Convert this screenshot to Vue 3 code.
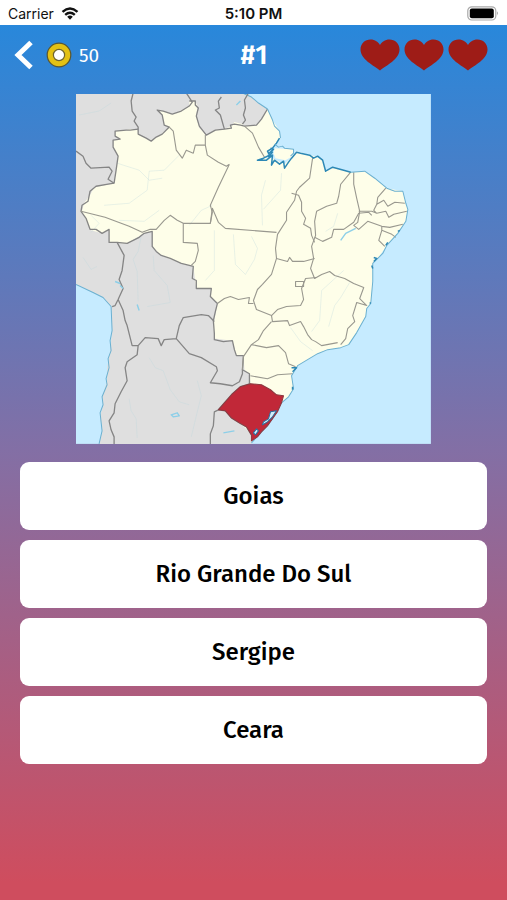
<template>
  <div class="screen">
    <div class="status-bar">
      <div class="carrier">
        <span>Carrier</span>
        <svg class="wifi" viewBox="0 0 18 13" aria-hidden="true">
          <path d="M1.5 4.8Q9 -1.8 16.5 4.8" />
          <path d="M4.2 7.8Q9 3.6 13.8 7.8" />
          <path class="wifi-dot" d="M6.2 9.8Q9 7.4 11.8 9.8L9 12.8Z" />
        </svg>
      </div>
      <div class="clock">5:10 PM</div>
      <svg class="battery" viewBox="0 0 32 15" aria-hidden="true">
        <rect x="0.8" y="0.8" width="28" height="13.2" rx="4" fill="#fff" stroke="#a9a9a9" stroke-width="1.2" />
        <rect x="2.8" y="2.6" width="24" height="9.6" rx="2" />
        <path d="M30.2 5.2q1.7 2.2 0 4.4z" fill="#777" />
      </svg>
    </div>

    <header class="top-bar">
      <div class="left">
        <button class="back" aria-label="Back">
          <svg viewBox="0 0 20 30"><path d="M17 2.500L4 15L17 27.500" /></svg>
        </button>
        <svg class="coin" viewBox="0 0 26 26" aria-hidden="true">
          <circle cx="13" cy="13" r="11.800" fill="#e3c114" stroke="#5a5630" stroke-width="1.200" />
          <circle cx="13" cy="13" r="5.600" fill="#fff" stroke="#6e6430" stroke-width="1.200" />
        </svg>
        <span class="coins">{{ coins }}</span>
      </div>
      <h1>#{{ level }}</h1>
      <div class="lives">
        <svg v-for="n in lives" :key="n" class="heart" viewBox="0 0 40 32" aria-hidden="true">
          <path d="M20 31.500C14 26.500 0.500 20.500 0.500 10.500C0.500 4.500 5 0.500 10.500 0.500C15 0.500 18.500 3 20 6C21.500 3 25 0.500 29.500 0.500C35 0.500 39.500 4.500 39.500 10.500C39.500 20.500 26 26.500 20 31.500Z" />
        </svg>
      </div>
    </header>

    <main>
      <svg class="map" viewBox="77 94 354 349" role="img" aria-label="Map">
        <rect x="77" y="94" width="354" height="349" fill="#c6ebff" />
        <!-- neighbouring countries -->
        <path class="abroad" d="M76 93H243L252 97L259 103L268 109L270 130L250 180L260 300L262 400L252 443H100L103 430L101 416L104 404L103 396L108 380L108 367L111 350L113 330L112 306L104 297L94 292L77 284Z" />
        <path class="coast" d="M77 284L94 292L104 297L112 306L113 330L111 340L112 350L109 358L110 367L107 378L108 384L103 396L104 404L101 412L103 430L100 443M243 93L252 97L259 103L268 109" />
        <!-- Brazil -->
        <path class="brazil" :d="brazil" />
        <path class="brazil" d="M275 148L294 149L293 156L286 160L276 158L274 153Z" />
        <path class="river" v-for="(d, i) in rivers" :key="'r' + i" :d="d" />
        <path class="border" v-for="(d, i) in borders" :key="'b' + i" :d="d" />
        <path class="state" v-for="(d, i) in states" :key="'s' + i" :d="d" />
        <path class="coast" :d="coast" />
        <path class="delta" d="M280 138L277 143L273 148L268 151L270 155L264 158L258 160L267 160L273 155L272 165L275 160L280 164L284 161L285 168L289 162L292 158L297 152L301 153L310 155L314 158L318 156L323 160L326 171L333 167L344 170L351 172M271 148L274 149L270 153L273 152L269 157" />
        <path class="coast" d="M275 144L279 147L283 146L285 148L294 149L294 153L291 156" />
        <path class="delta" d="M398 231L400 230M386 245L388 242M374 257L377 258L374 261M372 265L373 268M292 367L297 367L293 371M293 386L293 389M370 302L371 303" />
        <!-- highlighted state -->
        <path class="target" d="M219 409L226 401L233 393L241 386L251 383L262 384L271 389L277 394L284 395L282 402L278 411L273 418L268 425L262 431L258 436L252 440L252 434L247 426L240 422L232 417L226 410Z" />
        <path class="lagoon" d="M271 411L277 410L273 416L268 421L263 424L264 421L269 418Z" />
        <path class="lagoon" d="M257 428L259 430L256 434L254 432Z" />
        <path class="lake" d="M116 281L121 283M121 285L124 288M138 304L140 310M172 414L178 412L180 415L174 416ZM224 432L235 430M341 240L346 233L356 228M237 105L241 101" />
      </svg>

      <div class="answers">
        <button v-for="answer in answers" :key="answer" class="answer">{{ answer }}</button>
      </div>
    </main>
  </div>
</template>

<script setup>
import { ref } from 'vue';

const coins = ref(50);
const level = ref(1);
const lives = ref(3);
const answers = ref(['Goias', 'Rio Grande Do Sul', 'Sergipe', 'Ceara']);

const coast = 'M268 109L273 120L275 126L280 131L281 138M351 172L365 171L375 178L387 188L395 191L403 191L406 203L408 209L406 221L398 233L387 245L383 253L378 258L373 263L373 281L371 303L367 308L366 316L357 332L349 344L341 347L328 349L318 353L308 359L298 365L292 375L294 388L289 396L282 402L273 418L262 431L252 442';

const brazil = 'M116 131L127 130L131 129L138 129L140 135L147 138L152 140L162 134L170 127L165 125L163 115L158 110L164 111L173 114L181 111L190 106L190 101L196 101L198 106L197 116L200 128L207 135L216 130L225 129L232 126L235 122L243 124L245 126L257 125L262 119L268 109L273 120L280 131L281 138L270 150L266 158L273 158L285 164L291 158L297 151L315 156L323 160L326 171L333 167L352 172L365 171L375 178L387 188L403 191L406 203L408 209L406 221L398 233L387 245L378 258L373 263L373 281L371 303L367 308L366 316L357 332L349 344L341 347L328 349L318 353L308 359L298 365L292 375L294 388L289 396L282 402L273 418L262 431L252 442L252 433L240 422L226 410L219 409L233 393L251 382L250 373L245 369L244 355L237 355L233 340L215 338L214 325L218 303L211 296L212 288L197 288L194 266L182 263L162 255L153 246L153 231L143 234L128 243L110 242L110 230L103 233L92 230L88 222L83 211L85 203L91 195L95 187L115 183L119 156L114 147L114 140L121 139L116 136Z';

// country borders
const borders = [
  'M134 93L132 101L133 111L137 117L135 121L139 127L139 134L147 138L152 141L157 137L163 134L170 127L165 125L163 115L158 110L164 111L173 114L182 111L190 106L193 102L187 93',
  'M139 129L131 130L127 130L116 131V136L121 139L114 140L114 147L119 156L117 170L115 183L109 184L97 186L91 191L89 201L83 205L82 211L87 218L91 229L97 229L103 233L110 229V242H118L128 243L140 237L145 233L153 231L153 246L157 251L162 255L171 258L182 263L190 265L194 266L193 278L197 280L197 288H212L211 296L218 303L216 311L214 320L215 333L215 339L224 341L233 340L235 349L237 355H244L243 369L250 373L250 383',
  'M77 151L84 156L87 163L92 168L110 167L113 171L109 179L115 183',
  'M190 101L196 101L196 105L199 108L197 116L200 126L207 135L216 130L225 129L232 128L231 125L235 124L241 125L245 126L257 125L262 119L268 109',
  'M222 97L219 101L220 108L216 110L221 115L225 129M249 93L245 100L246 108L244 115L246 120L243 124',
  'M118 242L125 255L123 270L120 279L124 288L119 299L116 305L113 306M119 299L124 310L126 320L128 325L133 345L139 345L138 354L128 361L126 367L128 380L122 391L116 403L115 412L110 420L112 429L115 436V443',
  'M139 345L146 337L159 338L162 345L165 339L177 338L180 325L184 317L202 314L209 315L215 321M177 338L190 353L202 357L217 366L218 370L211 382L221 383L233 385L240 381L243 373L243 369',
  'M251 383L241 386L233 393L226 401L219 409L215 411L214 425L211 433V443M219 409L226 410L232 417L240 422L247 426L252 434',
];

// internal state borders
const states = [
  'M170 127L174 131L177 150L183 158L187 150L194 153L196 145H206V135M206 145L208 155L219 162L227 166L230 164M230 164L219 187L211 205L213 212L211 223M245 126L253 133L259 147L265 157',
  'M82 211L106 217L130 226L143 232L151 229L157 229L165 220L171 215L178 220L184 223H211L213 208L219 222L226 228L277 232',
  'M184 223V242L198 243L199 250L196 261L192 265',
  'M313 158L310 178L300 187L297 191L295 200L287 212L287 220L278 234L276 248L277 258L272 274L263 284L258 289L254 300L257 309L272 315L278 309L287 306L301 305L304 299L302 288L306 278L317 277',
  'M292 193L299 195L302 202V211L306 218L304 224L311 228L312 235L315 242',
  'M277 258L288 261L290 257L293 261L304 261L315 258',
  'M351 172L341 184L339 196L337 203L327 206L317 211L315 221L316 235L312 246L314 258L311 268L315 278L322 274L330 271L335 275L345 278L354 283L364 287L360 298L367 305L357 302L353 315L355 321L348 328L346 338L341 344',
  'M354 172L354 184L357 198L360 211L358 222L354 225L359 229L368 221L382 226L390 227L403 224',
  'M315 237L323 241L332 237L334 229L344 229L354 222L359 213L369 212L372 215',
  'M386 188L378 197L377 204L384 200L388 206L395 202L405 203M377 204L374 210L377 213L386 211L389 217L394 214L407 211M359 211H372L377 213M382 226L382 230L392 234L396 237M382 230L379 240L385 246',
  'M296 283L296 286H304V281H296ZM218 303L225 298L231 296L239 299L250 297L249 303L254 303',
  'M272 315L273 321L288 320L290 325L301 321L304 326L308 334L312 339L316 341L322 345L338 342M272 321L264 330L259 339L252 344L244 356L243 369',
  'M252 344L267 347L279 345L286 352L289 363L296 366M251 375L268 378L278 374L293 373',
];

const rivers = [
  'M80 115L100 111L112 103M118 163L140 170L150 180L163 178M180 155L165 170L150 171L148 190L130 203L105 205M190 225L202 210L213 205M120 220L145 221L160 210',
  'M92 215L100 223L92 232M84 257L92 269L98 266M142 236L139 251L134 259L138 271L139 301M154 255L155 270L168 285L171 302L148 306',
  'M150 357L156 367L164 370L171 389L180 401L190 404M130 398L132 410L137 418L138 437M198 380L202 395L197 415L192 436',
  'M215 230L215 270L206 280M234 234L236 264L246 274L255 259L258 248L252 236M266 180L262 195L263 225M282 173L281 190L264 209',
  'M338 213L334 226L326 231M344 270L322 290L320 320L312 331M350 282L341 297L335 305L329 326M291 327L301 341L313 350',
];
</script>

<style>
body {
  background: #cf4e60;
}
</style>

<style scoped>
.screen {
  min-height: 100vh;
  background: linear-gradient(to bottom, #2389de 0%, #836fa5 50%, #cf4d5e 98%);
  font-family: "Fira Sans", "Noto Sans", sans-serif;
}

.status-bar {
  display: grid;
  grid-template-columns: 1fr auto 1fr;
  align-items: center;
  height: 25px;
  padding: 2px 8px 0;
  box-sizing: border-box;
  background: #fff;
  color: #111;
  font-family: Inter, sans-serif;
  font-size: 14px;
}

.carrier {
  display: flex;
  align-items: center;
  gap: 7px;
}

.wifi {
  width: 18px;
  height: 13px;
  fill: none;
  stroke: #111;
  stroke-width: 2.4;
}

.wifi-dot {
  fill: #111;
  stroke: none;
}

.clock {
  font-size: 15px;
  font-weight: 600;
}

.battery {
  width: 32px;
  height: 15px;
  justify-self: end;
}

.top-bar {
  display: grid;
  grid-template-columns: 1fr auto 1fr;
  align-items: center;
  height: 60px;
  padding: 0 19px 0 20px;
  color: #fff;
}

.left {
  display: flex;
  align-items: center;
}

.back {
  display: flex;
  margin-left: -6px;
  padding: 0;
  border: none;
  background: none;
  cursor: pointer;
}

.back svg {
  width: 20px;
  height: 30px;
  fill: none;
  stroke: #fff;
  stroke-width: 5;
}

.coin {
  width: 26px;
  height: 26px;
  margin-left: 12px;
}

.coins {
  margin-left: 7px;
  font-size: 19px;
}

h1 {
  margin: 0;
  font-size: 27px;
  font-weight: 600;
}

.lives {
  display: flex;
  justify-content: flex-end;
  gap: 4px;
}

.heart {
  width: 40px;
  height: 32px;
  fill: #9e1c17;
}

main {
  padding: 9px 20px 20px;
}

.map {
  display: block;
  width: 76%;
  margin: 0 auto;
}

.map path {
  fill: none;
  stroke-linejoin: round;
}

.map .abroad {
  fill: #dfdfdf;
}

.map .brazil {
  fill: #fefee9;
}

.border {
  stroke: #858585;
  stroke-width: 1.3;
}

.state {
  stroke: #99988f;
  stroke-width: 1.1;
}

.river {
  stroke: #b9d5dc;
  stroke-width: 0.8;
  opacity: 0.4;
}

.coast {
  stroke: #6bb0d0;
  stroke-width: 1;
}

.delta {
  stroke: #2d88b5;
  stroke-width: 1.5;
}

.map .target {
  fill: #c12838;
  stroke: #8c3940;
  stroke-width: 1;
}

.map .lagoon {
  fill: #d5effa;
  stroke: #286f9f;
  stroke-width: 1;
}

.lake {
  stroke: #8dcfe8;
  stroke-width: 1.4;
}

.answers {
  display: flex;
  flex-direction: column;
  gap: 10px;
  margin-top: 18px;
}

.answer {
  height: 68px;
  border: none;
  border-radius: 9px;
  background: #fff;
  color: #000;
  font-family: inherit;
  font-size: 24px;
  font-weight: 500;
  cursor: pointer;
}
</style>
